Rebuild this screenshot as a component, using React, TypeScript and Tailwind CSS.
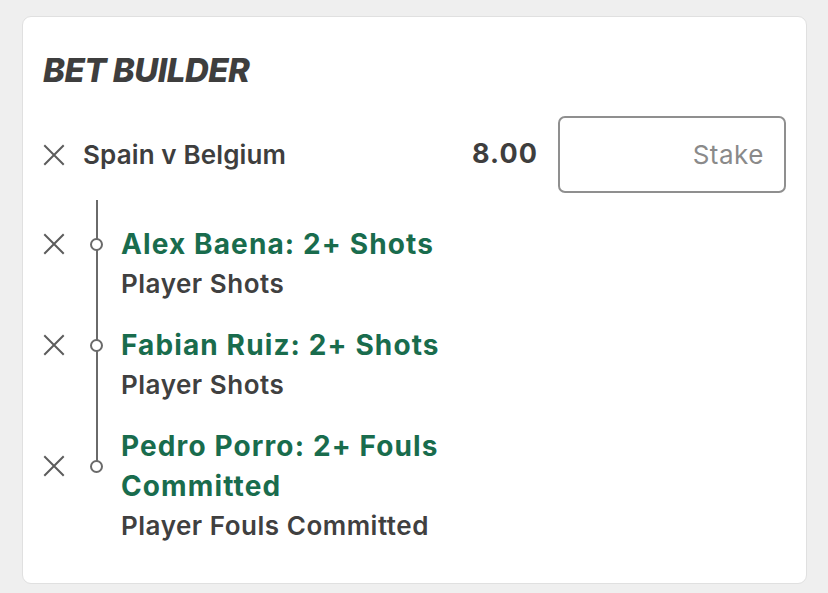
import React from "react";

const XIcon = () => (
  <svg width="22" height="22" viewBox="0 0 22 22" className="shrink-0">
    <path d="M2 2 L20 20 M20 2 L2 20" stroke="#5c5c5c" strokeWidth="2" strokeLinecap="square" />
  </svg>
);

const Dot = () => (
  <span className="relative z-10 block h-[13px] w-[13px] shrink-0 rounded-full border-2 border-[#6a6a6a] bg-white" />
);

type Item = { title: React.ReactNode; sub: string };

const items: Item[] = [
  { title: "Alex Baena: 2+ Shots", sub: "Player Shots" },
  { title: "Fabian Ruiz: 2+ Shots", sub: "Player Shots" },
  { title: "Pedro Porro: 2+ Fouls Committed", sub: "Player Fouls Committed" },
];

export default function App() {
  return (
    <div
      className="h-[593px] w-[828px] overflow-hidden bg-[#efefef] pl-[22px] pt-[16px]"
      style={{ fontFamily: "Inter, 'Liberation Sans', sans-serif" }}
    >
      <div className="h-[568px] w-[785px] rounded-[9px] border border-[#e0e0e0] bg-white px-[20px] pt-[33px]">
        <h1 className="text-[33px] font-extrabold italic leading-[40px] tracking-[-0.015em] text-[#3e3e3e]">
          BET BUILDER
        </h1>

        <div className="mt-[26px] flex h-[77px] items-center">
          <XIcon />
          <span className="ml-[18px] text-[26px] font-semibold tracking-[0.005em] text-[#3e3e3e]">Spain v Belgium</span>
          <span className="ml-auto text-[27px] font-bold tracking-[0.04em] text-[#3e3e3e]">8.00</span>
          <div className="ml-[20px] flex h-[77px] w-[228px] items-center justify-end rounded-[7px] border-2 border-[#8f8f8f] pr-[20px]">
            <span className="text-[26px] tracking-[0.02em] text-[#8a8a8a]">Stake</span>
          </div>
        </div>

        <div className="relative mt-[31px]">
          <div className="absolute left-[53px] top-[-24px] h-[265px] w-[2px] bg-[#6a6a6a]" />
          <div className="flex flex-col gap-[21px]">
            {items.map((it, i) => (
              <div key={i}>
                <div className="flex items-center">
                  <XIcon />
                  <span className="ml-[25px]">
                    <Dot />
                  </span>
                  <div className="ml-[18px] max-w-[380px] text-[28px] font-bold leading-[40px] tracking-[0.04em] text-[#196c4d]">
                    {it.title}
                  </div>
                </div>
                <div className="pl-[78px] text-[26px] font-semibold leading-[40px] tracking-[0.02em] text-[#404040]">
                  {it.sub}
                </div>
              </div>
            ))}
          </div>
        </div>
      </div>
    </div>
  );
}
